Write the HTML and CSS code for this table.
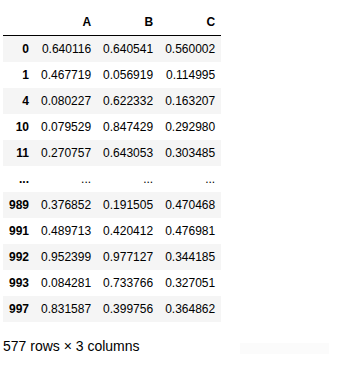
FILE: index.html
```html
<!DOCTYPE html>
<html>
<head>
<meta charset="utf-8">
<link rel="stylesheet" href="styles.css">
</head>
<body>
<div class="output">
  <table class="dataframe">
    <thead>
      <tr><th></th><th>A</th><th>B</th><th>C</th></tr>
    </thead>
    <tbody>
      <tr><th>0</th><td>0.640116</td><td>0.640541</td><td>0.560002</td></tr>
      <tr><th>1</th><td>0.467719</td><td>0.056919</td><td>0.114995</td></tr>
      <tr><th>4</th><td>0.080227</td><td>0.622332</td><td>0.163207</td></tr>
      <tr><th>10</th><td>0.079529</td><td>0.847429</td><td>0.292980</td></tr>
      <tr><th>11</th><td>0.270757</td><td>0.643053</td><td>0.303485</td></tr>
      <tr><th>...</th><td>...</td><td>...</td><td>...</td></tr>
      <tr><th>989</th><td>0.376852</td><td>0.191505</td><td>0.470468</td></tr>
      <tr><th>991</th><td>0.489713</td><td>0.420412</td><td>0.476981</td></tr>
      <tr><th>992</th><td>0.952399</td><td>0.977127</td><td>0.344185</td></tr>
      <tr><th>993</th><td>0.084281</td><td>0.733766</td><td>0.327051</td></tr>
      <tr><th>997</th><td>0.831587</td><td>0.399756</td><td>0.364862</td></tr>
    </tbody>
  </table>
  <p class="shape">577 rows × 3 columns<span class="ghost"></span></p>
</div>
</body>
</html>
```
FILE: styles.css
```css
html, body {
  margin: 0;
  padding: 0;
  background: #ffffff;
}
body {
  font-family: "Liberation Sans", Arial, sans-serif;
  color: #000000;
}
.output {
  padding: 9px 0 0 3px;
}
.dataframe {
  border-collapse: collapse;
  border-spacing: 0;
  border: none;
  font-size: 12px;
  line-height: 14px;
}
.dataframe thead {
  border-bottom: 1px solid #000000;
}
.dataframe th,
.dataframe td {
  padding: 6px;
  text-align: right;
  vertical-align: middle;
  white-space: nowrap;
  border: none;
}
.dataframe th {
  font-weight: bold;
}
.dataframe td {
  font-weight: normal;
}
.dataframe tbody tr:nth-child(odd) {
  background: #f5f5f5;
}
.shape {
  position: relative;
  margin: 16px 0 0 0;
  font-size: 14px;
  line-height: 16px;
}
.ghost {
  position: absolute;
  left: 237px;
  top: 5px;
  width: 89px;
  height: 15px;
  background: #fbfbfb;
}
```
